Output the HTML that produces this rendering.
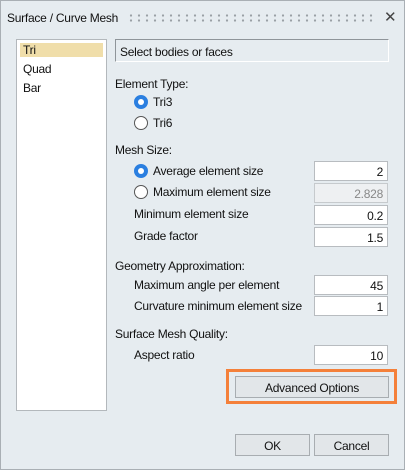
<!DOCTYPE html>
<html><head><style>
*{box-sizing:border-box;margin:0;padding:0}
body{width:405px;height:470px;background:#e6ecf0;font-family:"Liberation Sans",sans-serif;font-size:12px;letter-spacing:-0.25px;color:#111;position:relative;overflow:hidden}
.a{position:absolute;white-space:nowrap}
.frame{left:0;top:0;width:405px;height:470px;border:1px solid #a9afb4}
.inp{position:absolute;left:314px;width:74px;height:20px;background:#fff;border:1px solid #b8bcc0;text-align:right;padding:3px 4px 0 0;font-size:12px}
.rad{position:absolute;width:14px;height:14px;border-radius:50%;border:1px solid #555;background:#fff}
.rad.on{background:#2b7fe0;border-color:#2b7fe0}
.rad.on:after{content:"";position:absolute;left:3px;top:3px;width:6px;height:6px;border-radius:50%;background:#fff}
.btn{position:absolute;height:22px;background:#e2e6e9;border:1px solid #a8adb1;text-align:center;padding-top:4px}
</style></head><body>
<div class="a frame"></div>
<div class="a" style="left:7px;top:11px;font-size:12px">Surface / Curve Mesh</div>
<div class="a" style="left:127px;top:13px;width:250px;height:10px;background-image:radial-gradient(circle,#9aa0a5 1px,transparent 1.3px);background-size:8px 5px"></div>
<div class="a" style="left:384px;top:8px;font-size:15px;color:#444">✕</div>
<div class="a" style="left:16px;top:39px;width:91px;height:372px;background:#fff;border:1px solid #b3b8bc"></div>
<div class="a" style="left:20px;top:43px;width:83px;height:14px;background:#f0deaa"></div>
<div class="a" style="left:23px;top:43px">Tri</div>
<div class="a" style="left:23px;top:62px">Quad</div>
<div class="a" style="left:23px;top:81px">Bar</div>
<div class="a" style="left:115px;top:39px;width:274px;height:23px;border:1px solid #8f959a;border-right-color:#fff;border-bottom-color:#fff;padding:5px 0 0 4px">Select bodies or faces</div>
<div class="a" style="left:115px;top:77px">Element Type:</div>
<div class="rad on" style="left:134px;top:95px"></div><div class="a" style="left:153px;top:95px">Tri3</div>
<div class="rad" style="left:134px;top:116px"></div><div class="a" style="left:153px;top:116px">Tri6</div>
<div class="a" style="left:115px;top:143px">Mesh Size:</div>
<div class="rad on" style="left:134px;top:164px"></div><div class="a" style="left:153px;top:164px">Average element size</div>
<div class="inp" style="top:161px">2</div>
<div class="rad" style="left:134px;top:185px"></div><div class="a" style="left:153px;top:185px">Maximum element size</div>
<div class="inp" style="top:183px;background:#eef0f2;color:#888;border-color:#c6cacd">2.828</div>
<div class="a" style="left:134px;top:207px">Minimum element size</div>
<div class="inp" style="top:205px">0.2</div>
<div class="a" style="left:134px;top:229px">Grade factor</div>
<div class="inp" style="top:227px">1.5</div>
<div class="a" style="left:115px;top:259px">Geometry Approximation:</div>
<div class="a" style="left:134px;top:278px">Maximum angle per element</div>
<div class="inp" style="top:275px">45</div>
<div class="a" style="left:134px;top:299px">Curvature minimum element size</div>
<div class="inp" style="top:296px">1</div>
<div class="a" style="left:115px;top:327px">Surface Mesh Quality:</div>
<div class="a" style="left:134px;top:348px">Aspect ratio</div>
<div class="inp" style="top:345px">10</div>
<div class="a" style="left:226px;top:369px;width:171px;height:35px;border:3px solid #f4803a"></div>
<div class="btn" style="left:235px;top:376px;width:154px">Advanced Options</div>
<div class="btn" style="left:235px;top:434px;width:75px">OK</div>
<div class="btn" style="left:314px;top:434px;width:75px">Cancel</div>
</body></html>
